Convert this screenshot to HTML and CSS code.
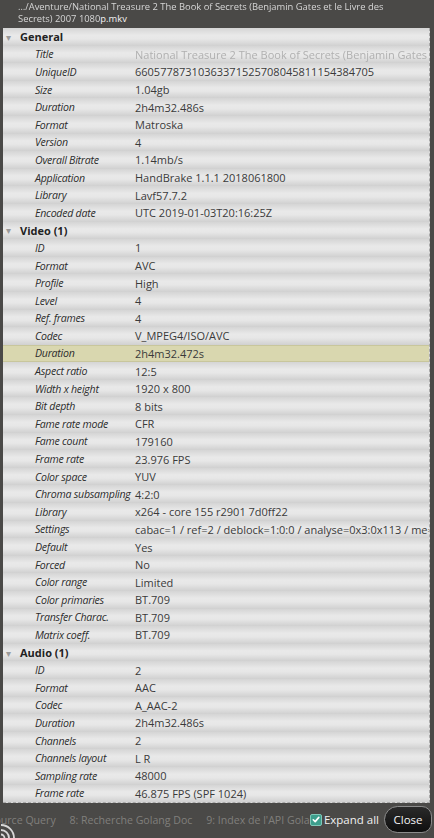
FILE: index.html
```html
<!DOCTYPE html>
<html lang="en">
<head>
  <meta charset="UTF-8" />
  <meta name="viewport" content="width=device-width, initial-scale=1.0" />
  <title>Media Info</title>
  <link rel="stylesheet" href="styles.css">
</head>
<body>
  <div class="window">
    <div class="titlebar">
      <span class="blur">…/Aventure/National Treasure 2 The Book of Secrets (Benjamin Gates et le Livre des</span><br>
      <span class="blur">Secrets) 2007 1080</span>p.mkv
    </div>

    <div class="panel">
      <div class="row head"><span class="arrow">▾</span>General</div>
      <div class="row"><span class="key">Title</span><span class="val blurred">National Treasure 2 The Book of Secrets (Benjamin Gates et le Livre des Secrets)</span></div>
      <div class="row"><span class="key">UniqueID</span><span class="val">66057787310363371525708045811154384705</span></div>
      <div class="row"><span class="key">Size</span><span class="val">1.04gb</span></div>
      <div class="row"><span class="key">Duration</span><span class="val">2h4m32.486s</span></div>
      <div class="row"><span class="key">Format</span><span class="val">Matroska</span></div>
      <div class="row"><span class="key">Version</span><span class="val">4</span></div>
      <div class="row"><span class="key">Overall Bitrate</span><span class="val">1.14mb/s</span></div>
      <div class="row"><span class="key">Application</span><span class="val">HandBrake 1.1.1 2018061800</span></div>
      <div class="row"><span class="key">Library</span><span class="val">Lavf57.7.2</span></div>
      <div class="row"><span class="key">Encoded date</span><span class="val">UTC 2019-01-03T20:16:25Z</span></div>

      <div class="row head"><span class="arrow">▾</span>Video (1)</div>
      <div class="row"><span class="key">ID</span><span class="val">1</span></div>
      <div class="row"><span class="key">Format</span><span class="val">AVC</span></div>
      <div class="row"><span class="key">Profile</span><span class="val">High</span></div>
      <div class="row"><span class="key">Level</span><span class="val">4</span></div>
      <div class="row"><span class="key">Ref. frames</span><span class="val">4</span></div>
      <div class="row"><span class="key">Codec</span><span class="val">V_MPEG4/ISO/AVC</span></div>
      <div class="row sel"><span class="key">Duration</span><span class="val">2h4m32.472s</span></div>
      <div class="row"><span class="key">Aspect ratio</span><span class="val">12:5</span></div>
      <div class="row"><span class="key">Width x height</span><span class="val">1920 x 800</span></div>
      <div class="row"><span class="key">Bit depth</span><span class="val">8 bits</span></div>
      <div class="row"><span class="key">Fame rate mode</span><span class="val">CFR</span></div>
      <div class="row"><span class="key">Fame count</span><span class="val">179160</span></div>
      <div class="row"><span class="key">Frame rate</span><span class="val">23.976 FPS</span></div>
      <div class="row"><span class="key">Color space</span><span class="val">YUV</span></div>
      <div class="row"><span class="key">Chroma subsampling</span><span class="val">4:2:0</span></div>
      <div class="row"><span class="key">Library</span><span class="val">x264 - core 155 r2901 7d0ff22</span></div>
      <div class="row"><span class="key">Settings</span><span class="val">cabac=1 / ref=2 / deblock=1:0:0 / analyse=0x3:0x113 / me=hex / subme=6</span></div>
      <div class="row"><span class="key">Default</span><span class="val">Yes</span></div>
      <div class="row"><span class="key">Forced</span><span class="val">No</span></div>
      <div class="row"><span class="key">Color range</span><span class="val">Limited</span></div>
      <div class="row"><span class="key">Color primaries</span><span class="val">BT.709</span></div>
      <div class="row"><span class="key">Transfer Charac.</span><span class="val">BT.709</span></div>
      <div class="row"><span class="key">Matrix coeff.</span><span class="val">BT.709</span></div>

      <div class="row head"><span class="arrow">▾</span>Audio (1)</div>
      <div class="row"><span class="key">ID</span><span class="val">2</span></div>
      <div class="row"><span class="key">Format</span><span class="val">AAC</span></div>
      <div class="row"><span class="key">Codec</span><span class="val">A_AAC-2</span></div>
      <div class="row"><span class="key">Duration</span><span class="val">2h4m32.486s</span></div>
      <div class="row"><span class="key">Channels</span><span class="val">2</span></div>
      <div class="row"><span class="key">Channels layout</span><span class="val">L R</span></div>
      <div class="row"><span class="key">Sampling rate</span><span class="val">48000</span></div>
      <div class="row"><span class="key">Frame rate</span><span class="val">46.875 FPS (SPF 1024)</span></div>
    </div>

    <div class="footer">
      <div class="tabs">
        <span class="tab">7: Source Query</span>
        <span class="tab">8: Recherche Golang Doc</span>
        <span class="tab">9: Index de l'API Golang</span>
      </div>
      <label class="expand">
        <span class="check">
          <svg width="11" height="11" viewBox="0 0 11 11"><path d="M2.5 5.8 L4.6 7.8 L8.6 3.2" fill="none" stroke="#fff" stroke-width="1.8" stroke-linecap="round" stroke-linejoin="round"/></svg>
        </span>
        Expand all
      </label>
      <button class="close">Close</button>
      <svg class="wifi" width="18" height="16" viewBox="0 0 18 16">
        <path d="M1 8 A8 8 0 0 1 9 16" fill="none" stroke="#d8d8d8" stroke-width="1.8"/>
        <path d="M1 3 A13 13 0 0 1 14 16" fill="none" stroke="#d8d8d8" stroke-width="1.8"/>
        <path d="M1 12.5 A3.5 3.5 0 0 1 4.5 16" fill="none" stroke="#d8d8d8" stroke-width="1.8"/>
      </svg>
    </div>
  </div>
</body>
</html>
```

FILE: styles.css
```css
* {
  box-sizing: border-box;
  margin: 0;
  padding: 0;
}

body {
  font-family: 'Open Sans', 'DejaVu Sans', sans-serif;
  background-color: #4a4947;
  width: 434px;
  height: 838px;
  overflow: hidden;
}

.window {
  position: relative;
  height: 838px;
}

.titlebar {
  height: 28px;
  padding: 1px 0 0 18px;
  font-size: 9.4px;
  line-height: 12px;
  color: #f2f2f2;
  white-space: nowrap;
  overflow: hidden;
}

.titlebar .blur {
  color: #d6d6d6;
  filter: blur(0.7px);
}

.panel {
  margin: 0 4px 0 3px;
  background-color: #dcdcdc;
  border-right: 1px dashed #a8a8a8;
  border-bottom: 1px dashed #a8a8a8;
}

.row {
  display: flex;
  align-items: center;
  height: 17.6px;
  font-size: 11px;
  color: #333;
  white-space: nowrap;
  overflow: hidden;
  background: linear-gradient(#d5d5d5, #e9e9e9 40%, #e7e7e7 60%, #d0d0d0);
}

.row.sel {
  background: #d9d7af;
  border-top: 1px solid #c8c69c;
  border-bottom: 1px solid #c8c69c;
}

.row.head {
  font-weight: 700;
  color: #222;
  padding-left: 3px;
}

.arrow {
  width: 14px;
  color: #9a9a9a;
  font-size: 10px;
  font-weight: 400;
}

.key {
  width: 100px;
  margin-left: 32px;
  font-size: 10.6px;
  font-style: italic;
  letter-spacing: -0.25px;
  color: #2c2c2c;
  flex-shrink: 0;
}

.val {
  color: #3a3a3a;
}

.val.blurred {
  color: #b0b0b0;
  filter: blur(0.7px);
}

.footer {
  display: flex;
  align-items: center;
  height: 32px;
  font-size: 10.6px;
}

.tabs {
  flex: 1;
  overflow: hidden;
  white-space: nowrap;
  color: #807f7c;
  padding-top: 2px;
}

.tabs .tab:first-child {
  margin-left: -23px;
}

.tab {
  margin-right: 11px;
}

.expand {
  display: flex;
  align-items: center;
  gap: 2px;
  color: #f0f0f0;
  font-size: 11.5px;
  margin-right: 5px;
  padding-top: 1px;
}

.check {
  display: flex;
  align-items: center;
  justify-content: center;
  width: 12px;
  height: 12px;
  background-color: #3d9e8c;
  border: 1px solid #7fc8b8;
  border-radius: 2px;
}

.close {
  width: 48px;
  height: 27px;
  margin-top: 1px;
  margin-right: 2px;
  font-family: inherit;
  font-size: 11.5px;
  color: #f4f4f4;
  background: linear-gradient(#2a2a2a, #0e0e0e);
  border: 1px solid #8c8c8c;
  border-radius: 16px 12px 12px 16px;
}

.wifi {
  position: absolute;
  left: 0;
  bottom: 0;
}
```
